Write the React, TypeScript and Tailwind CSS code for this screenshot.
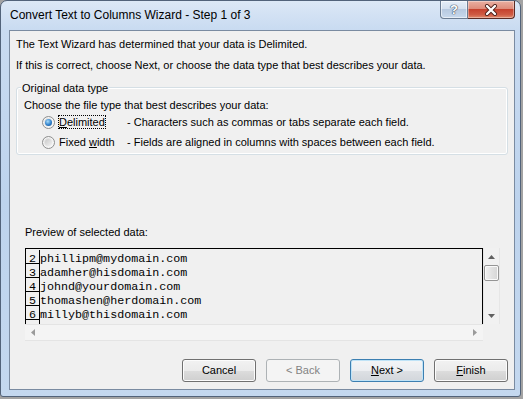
import React from "react";

const UI = { fontFamily: '"Liberation Sans", Arial, sans-serif' };
const MONO = { fontFamily: '"Liberation Mono", "Courier New", monospace' };

function Radio({ checked }: { checked?: boolean }) {
  return (
    <span className="w-[13px] h-[13px] shrink-0 rounded-full border border-[#8e8f8f] bg-[linear-gradient(135deg,#d5d5d5,#ffffff)] shadow-[inset_0_0_0_1px_#f6f6f6] flex items-center justify-center">
      {checked ? (
        <span className="w-[7px] h-[7px] rounded-full bg-[radial-gradient(circle_at_40%_35%,#a8dcfa,#2f80cb_55%,#174a86)]" />
      ) : (
        <span className="w-[7px] h-[7px] rounded-full bg-[linear-gradient(135deg,#c9c9c9,#f2f2f2)]" />
      )}
    </span>
  );
}

function Btn({
  children,
  kind = "normal",
}: {
  children: React.ReactNode;
  kind?: "normal" | "disabled" | "default";
}) {
  const base =
    "w-[74px] h-[23px] rounded-[3px] border flex items-center justify-center text-[11px]";
  if (kind === "disabled")
    return (
      <div className={base + " border-[#adb2b5] bg-[#f4f4f4] text-[#838383]"}>
        {children}
      </div>
    );
  if (kind === "default")
    return (
      <div
        className={
          base +
          " border-[#3c7fb1] bg-[linear-gradient(to_bottom,#f3f5f7_0%,#eceef1_50%,#dee1e5_50%,#d2d6db_100%)] shadow-[inset_0_0_0_1px_#bfe3f7] text-black"
        }
      >
        {children}
      </div>
    );
  return (
    <div
      className={
        base +
        " border-[#707070] bg-[linear-gradient(to_bottom,#f2f2f2_0%,#ebebeb_50%,#dddddd_50%,#cfcfcf_100%)] shadow-[inset_0_0_0_1px_#fcfcfc] text-black"
      }
    >
      {children}
    </div>
  );
}

function Tri({ dir, color = "#5a5a5a" }: { dir: "up" | "down" | "left" | "right"; color?: string }) {
  const pts: Record<string, string> = {
    up: "0,4 3.5,0 7,4",
    down: "0,0 3.5,4 7,0",
    left: "4,0 0,3.5 4,7",
    right: "0,0 4,3.5 0,7",
  };
  const w = dir === "up" || dir === "down" ? 7 : 4;
  const h = dir === "up" || dir === "down" ? 4 : 7;
  return (
    <svg width={w} height={h} viewBox={`0 0 ${w} ${h}`}>
      <polygon points={pts[dir]} fill={color} />
    </svg>
  );
}

const rows = [
  ["2", "phillipm@mydomain.com"],
  ["3", "adamher@hisdomain.com"],
  ["4", "johnd@yourdomain.com"],
  ["5", "thomashen@herdomain.com"],
  ["6", "millyb@thisdomain.com"],
];

export default function App() {
  return (
    <div className="w-[523px] h-[399px] bg-[#a3a3a3] overflow-hidden" style={UI}>
      <div className="w-[521px] h-[397px] rounded-t-[7px] rounded-b-[3px] border border-[#52637a] bg-[linear-gradient(to_bottom,#dce8f6_0px,#c9dbf1_28px,#bdd3ed_200px,#c4d8ef_396px)] pl-[8px] pr-[5px] pb-[6px] flex flex-col">
        {/* Title bar */}
        <div className="h-[29px] w-[506px] flex items-start justify-between">
          <div className="pl-[1px] pt-[6px] text-[12px] leading-[16px] text-black">
            Convert Text to Columns Wizard - Step 1 of 3
          </div>
          <div className="flex">
            <div className="w-[28px] h-[18px] border border-t-0 border-[#6b7c92] rounded-bl-[4px] bg-[linear-gradient(to_bottom,#e6eef8_0%,#d4e0ef_45%,#b7c9e0_50%,#c8d9ed_100%)] shadow-[inset_0_0_0_1px_rgba(255,255,255,0.55)] flex items-center justify-center">
              <span className="text-[13px] font-bold leading-none text-white [text-shadow:0_0_1px_#3b4a5e,0_0_1px_#3b4a5e,0_0_1px_#3b4a5e]">
                ?
              </span>
            </div>
            <div className="w-[47px] h-[18px] border border-t-0 border-l-0 border-[#5b2b24] rounded-br-[4px] bg-[linear-gradient(to_bottom,#eab0a2_0%,#de8c7b_45%,#c6422e_50%,#cf5b44_80%,#e08a6c_100%)] shadow-[inset_0_0_0_1px_rgba(255,255,255,0.35)] flex items-center justify-center">
              <svg width="14" height="12" viewBox="0 0 14 12">
                <path d="M3 2 L11 10 M11 2 L3 10" stroke="#4a1d16" strokeWidth="4" strokeLinecap="round" />
                <path d="M3 2 L11 10 M11 2 L3 10" stroke="#ffffff" strokeWidth="2.4" strokeLinecap="round" />
              </svg>
            </div>
          </div>
        </div>

        {/* Client area */}
        <div className="w-[506px] h-[360px] border border-[#7a8ba1] bg-[#f0f0f0] px-[6px] flex flex-col text-[11px] text-black">
          <div className="mt-[5px] h-[16px] leading-[16px]">
            The Text Wizard has determined that your data is Delimited.
          </div>
          <div className="mt-[5px] h-[16px] leading-[16px]">
            If this is correct, choose Next, or choose the data type that best describes your data.
          </div>

          {/* Group box */}
          <div className="relative mt-[14px] h-[68px] w-[492px] border border-[#d5dfe5] rounded-[3px] shadow-[inset_0_0_0_1px_#ffffff] pl-[7px] pt-[9px]">
            <span className="absolute left-[4px] -top-[8px] px-[1px] h-[16px] leading-[16px] bg-[#f0f0f0]">
              Original data type
            </span>
            <div className="h-[16px] leading-[16px]">
              Choose the file type that best describes your data:
            </div>
            <div className="mt-[1px] h-[16px] flex items-center whitespace-nowrap">
              <div className="w-[103px] pl-[18px] flex items-center shrink-0">
                <Radio checked />
                <span className="ml-[3px] border border-dotted border-black leading-[12px]">
                  <u>D</u>elimited
                </span>
              </div>
              <span className="leading-[16px]">- Characters such as commas or tabs separate each field.</span>
            </div>
            <div className="mt-[4px] h-[16px] flex items-center whitespace-nowrap">
              <div className="w-[103px] pl-[18px] flex items-center shrink-0">
                <Radio />
                <span className="ml-[4px] leading-[12px]">
                  Fixed <u>w</u>idth
                </span>
              </div>
              <span className="leading-[16px]">- Fields are aligned in columns with spaces between each field.</span>
            </div>
          </div>

          <div className="mt-[69px] ml-[9px] h-[16px] leading-[16px]">Preview of selected data:</div>

          {/* Preview */}
          <div className="mt-[8px] ml-[9px] flex flex-col w-[475px]">
            <div className="flex h-[76px]">
              <div className="w-[458px] h-[76px] border-t border-l border-r border-black pt-[1px] flex flex-col overflow-hidden" style={MONO}>
                {rows.map(([n, e]) => (
                  <div key={n} className="flex h-[14px] shrink-0 text-[11.7px] leading-[18px]">
                    <div className="w-[14px] h-[14px] border-r border-b border-black text-center">{n}</div>
                    <div className="h-[14px]">{e}</div>
                  </div>
                ))}
                <div className="flex-1 w-[14px] border-r border-black" />
              </div>
              <div className="w-[17px] h-[76px] bg-[#f1f1f1] border-l border-r border-[#e6e6e6] flex flex-col items-center">
                <div className="h-[17px] flex items-center justify-center">
                  <Tri dir="up" color="#606060" />
                </div>
                <div className="w-[15px] h-[16px] rounded-[2px] border border-[#959595] bg-[linear-gradient(to_right,#f3f3f3,#e2e2e2_50%,#d6d6d6)] shadow-[inset_0_0_0_1px_#fafafa]" />
                <div className="flex-1" />
                <div className="h-[17px] flex items-center justify-center">
                  <Tri dir="down" color="#606060" />
                </div>
              </div>
            </div>
            <div className="flex h-[17px]">
              <div className="w-[458px] h-[17px] border-t border-b border-[#e4e4e4] bg-[#f4f4f4] flex items-center justify-between pl-[6px] pr-[6px]">
                <Tri dir="left" color="#9a9a9a" />
                <Tri dir="right" color="#9a9a9a" />
              </div>
              <div className="w-[17px] h-[17px] bg-[#f0f0f0]" />
            </div>
          </div>

          {/* Buttons */}
          <div className="mt-[18px] flex justify-end gap-[10px]">
            <Btn>Cancel</Btn>
            <Btn kind="disabled">&lt; Back</Btn>
            <Btn kind="default">
              <span>
                <u>N</u>ext &gt;
              </span>
            </Btn>
            <Btn>
              <span>
                <u>F</u>inish
              </span>
            </Btn>
          </div>
        </div>
      </div>
    </div>
  );
}
